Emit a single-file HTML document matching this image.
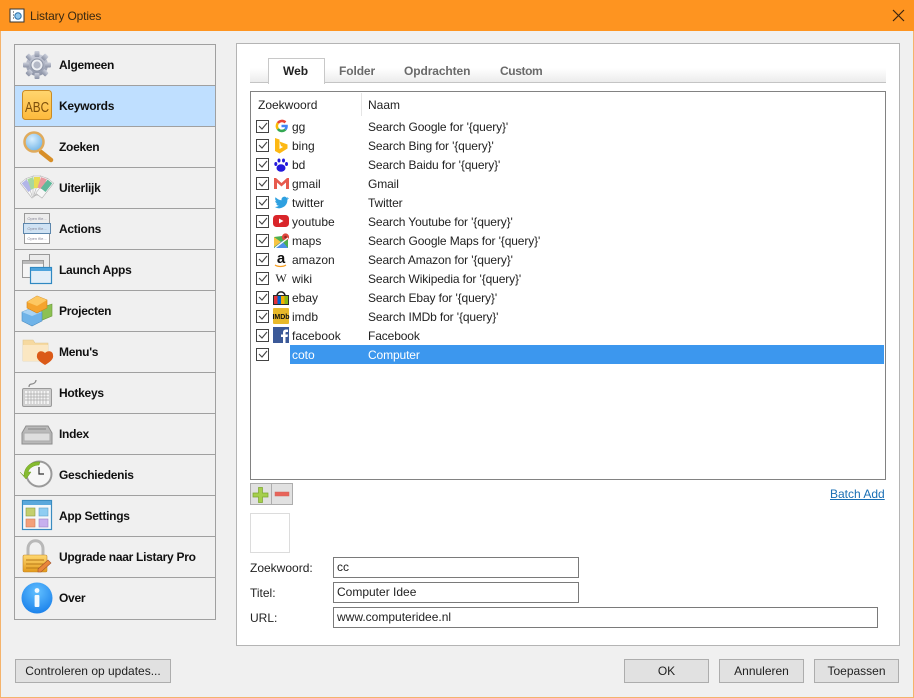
<!DOCTYPE html>
<html><head><meta charset="utf-8"><title>Listary Opties</title>
<style>
html,body{margin:0;padding:0}
body{width:914px;height:698px;position:relative;overflow:hidden;background:#f0f0f0;font-family:"Liberation Sans",sans-serif;font-size:12px;color:#222}
.a{position:absolute;white-space:nowrap}
.s{position:absolute;left:14px;width:200px;height:40px;border:1px solid #a0a0a0;border-bottom:0;background:#f0f0f0}
.sl{position:absolute;left:59px;font-weight:bold;color:#101010;font-size:12px;white-space:nowrap;line-height:14px;letter-spacing:-.28px}
.k{position:absolute;left:292px;white-space:nowrap;line-height:14px}
.n{position:absolute;left:368px;white-space:nowrap;line-height:14px;letter-spacing:-.12px}
.b{position:absolute;box-sizing:border-box;background:#e1e1e1;border:1px solid #adadad;text-align:center;line-height:22px;height:24px;color:#222}
.i{position:absolute;box-sizing:border-box;background:#fff;border:1px solid #7a7a7a;height:21px;line-height:19px;padding-left:3px;left:333px}
.t{position:absolute;top:64px;font-weight:bold;font-size:12px;line-height:14px;color:#6a6a6a;letter-spacing:-.1px}
</style></head><body>
<div class="a" style="left:0;top:0;width:914px;height:31px;background:#fe9420"></div>
<div class="a" style="left:0;top:31px;width:1px;height:667px;background:#f5b36b"></div>
<div class="a" style="right:0;top:31px;width:1px;height:667px;background:#f5b36b"></div>
<div class="a" style="left:0;top:697px;width:914px;height:1px;background:#f5b36b"></div>
<div class="a" style="left:30px;top:9px;color:#3a2a12;font-size:12px;line-height:14px;letter-spacing:-.15px">Listary Opties</div>

<div class="s" style="top:44px"></div>
<div class="s" style="top:85px;background:#bfdfff"></div>
<div class="s" style="top:126px"></div>
<div class="s" style="top:167px"></div>
<div class="s" style="top:208px"></div>
<div class="s" style="top:249px"></div>
<div class="s" style="top:290px"></div>
<div class="s" style="top:331px"></div>
<div class="s" style="top:372px"></div>
<div class="s" style="top:413px"></div>
<div class="s" style="top:454px"></div>
<div class="s" style="top:495px"></div>
<div class="s" style="top:536px"></div>
<div class="s" style="top:577px;height:41px;border-bottom:1px solid #a0a0a0"></div>
<div class="sl" style="top:58px">Algemeen</div>
<div class="sl" style="top:99px">Keywords</div>
<div class="sl" style="top:140px">Zoeken</div>
<div class="sl" style="top:181px">Uiterlijk</div>
<div class="sl" style="top:222px">Actions</div>
<div class="sl" style="top:263px">Launch Apps</div>
<div class="sl" style="top:304px">Projecten</div>
<div class="sl" style="top:345px">Menu's</div>
<div class="sl" style="top:386px">Hotkeys</div>
<div class="sl" style="top:427px">Index</div>
<div class="sl" style="top:468px">Geschiedenis</div>
<div class="sl" style="top:509px">App Settings</div>
<div class="sl" style="top:550px">Upgrade naar Listary Pro</div>
<div class="sl" style="top:591px">Over</div>

<div class="a" style="left:236px;top:43px;width:662px;height:601px;background:#fff;border:1px solid #b4b4b4"></div>
<div class="a" style="left:250px;top:68px;width:636px;height:14px;background:linear-gradient(#fff,#ececec);border-bottom:1px solid #c4c4c4"></div>
<div class="a" style="left:268px;top:58px;width:55px;height:25px;background:#fff;border:1px solid #c8c8c8;border-bottom:0"></div>
<div class="t" style="left:283px;color:#222;letter-spacing:0">Web</div>
<div class="t" style="left:339px">Folder</div>
<div class="t" style="left:404px">Opdrachten</div>
<div class="t" style="left:500px;letter-spacing:-.4px">Custom</div>

<div class="a" style="left:250px;top:91px;width:634px;height:387px;background:#fff;border:1px solid #828282"></div>
<div class="a" style="left:361px;top:93px;width:1px;height:23px;background:#e5e5e5"></div>
<div class="a" style="left:258px;top:98px;line-height:14px">Zoekwoord</div>
<div class="a" style="left:368px;top:98px;line-height:14px">Naam</div>
<div class="a" style="left:290px;top:345px;width:594px;height:19px;background:#3c97ee"></div>

<div class="k" style="top:120px">gg</div><div class="n" style="top:120px">Search Google for '{query}'</div>
<div class="k" style="top:139px">bing</div><div class="n" style="top:139px">Search Bing for '{query}'</div>
<div class="k" style="top:158px">bd</div><div class="n" style="top:158px">Search Baidu for '{query}'</div>
<div class="k" style="top:177px">gmail</div><div class="n" style="top:177px">Gmail</div>
<div class="k" style="top:196px">twitter</div><div class="n" style="top:196px">Twitter</div>
<div class="k" style="top:215px">youtube</div><div class="n" style="top:215px">Search Youtube for '{query}'</div>
<div class="k" style="top:234px">maps</div><div class="n" style="top:234px">Search Google Maps for '{query}'</div>
<div class="k" style="top:253px">amazon</div><div class="n" style="top:253px">Search Amazon for '{query}'</div>
<div class="k" style="top:272px">wiki</div><div class="n" style="top:272px">Search Wikipedia for '{query}'</div>
<div class="k" style="top:291px">ebay</div><div class="n" style="top:291px">Search Ebay for '{query}'</div>
<div class="k" style="top:310px">imdb</div><div class="n" style="top:310px">Search IMDb for '{query}'</div>
<div class="k" style="top:329px">facebook</div><div class="n" style="top:329px">Facebook</div>
<div class="k" style="top:348px;color:#fff">coto</div><div class="n" style="top:348px;color:#fff">Computer</div>

<svg class="a" style="left:0;top:0" width="914" height="698" viewBox="0 0 914 698" xmlns="http://www.w3.org/2000/svg">
<defs>
<linearGradient id="gear" x1="0" y1="0" x2="0" y2="1"><stop offset="0" stop-color="#ccd0dc"/><stop offset="1" stop-color="#8b92a5"/></linearGradient>
<linearGradient id="abc" x1="0" y1="0" x2="0" y2="1"><stop offset="0" stop-color="#ffd56e"/><stop offset="1" stop-color="#fdb93c"/></linearGradient>
<radialGradient id="lens" cx=".4" cy=".35" r=".7"><stop offset="0" stop-color="#d8efff"/><stop offset="1" stop-color="#6db2e6"/></radialGradient>
<radialGradient id="inf" cx=".5" cy=".3" r=".8"><stop offset="0" stop-color="#62c0ff"/><stop offset="1" stop-color="#1279e8"/></radialGradient>
<linearGradient id="gold" x1="0" y1="0" x2="0" y2="1"><stop offset="0" stop-color="#ffd870"/><stop offset="1" stop-color="#e39a1c"/></linearGradient>
</defs>
<!-- title icon -->
<rect x="10" y="9" width="14" height="13" fill="#fff" stroke="#333" stroke-width="1"/><circle cx="18" cy="16" r="3.2" fill="#8fc7ee" stroke="#2a6fa8"/><path d="M13 12h1M13 15h1M13 18h1" stroke="#333"/>
<path d="M893 10l11 11M904 10l-11 11" stroke="#3a2410" stroke-width="1.2" fill="none"/>
<!-- gear -->
<g transform="translate(37 65)"><g fill="url(#gear)"><circle r="11"/><g id="t"><rect x="-2.500" y="-14" width="5" height="6" rx="1"/><rect x="-2.500" y="8" width="5" height="6" rx="1"/><rect x="-14" y="-2.500" width="6" height="5" rx="1"/><rect x="8" y="-2.500" width="6" height="5" rx="1"/></g><use href="#t" transform="rotate(45)"/></g><circle r="6" fill="#eef0f4" stroke="#8d94a5"/><circle r="3.600" fill="#b4b9c7"/></g>
<!-- abc -->
<rect x="22.500" y="90.500" width="29" height="29" rx="3" fill="url(#abc)" stroke="#c98b24"/><text x="25" y="112" font-family="Liberation Sans,sans-serif" font-size="15" fill="#7d4f0c" textLength="24" lengthAdjust="spacingAndGlyphs">ABC</text>
<!-- search -->
<path d="M41 152l10 8" stroke="#d88f28" stroke-width="4.500" stroke-linecap="round"/><circle cx="34" cy="142" r="9.500" fill="url(#lens)" stroke="#e0ab5c" stroke-width="2.500"/>
<!-- palette -->
<g stroke="#aaa" stroke-width=".5" fill="#f6f6f6"><rect x="33" y="176" width="8" height="19" transform="rotate(-38 37 198)"/><rect x="33" y="176" width="8" height="19" transform="rotate(-19 37 198)"/><rect x="33" y="176" width="8" height="19"/><rect x="33" y="176" width="8" height="19" transform="rotate(19 37 198)"/><rect x="33" y="176" width="8" height="19" transform="rotate(38 37 198)"/></g>
<g><rect x="34" y="177" width="6" height="11" fill="#b2b6e8" transform="rotate(-38 37 198)"/><rect x="34" y="177" width="6" height="11" fill="#a7d7a0" transform="rotate(-19 37 198)"/><rect x="34" y="177" width="6" height="11" fill="#e9dc55"/><rect x="34" y="177" width="6" height="11" fill="#e89aa0" transform="rotate(19 37 198)"/><rect x="34" y="177" width="6" height="11" fill="#5fb89a" transform="rotate(38 37 198)"/></g>
<!-- actions -->
<g font-family="Liberation Sans,sans-serif" font-size="4" fill="#889" text-anchor="middle"><rect x="24.500" y="213.500" width="25" height="10" fill="#ececec" stroke="#999"/><text x="37" y="220">Open file...</text><rect x="24.500" y="233.500" width="25" height="10" fill="#fff" stroke="#999"/><text x="37" y="240">Open file...</text><rect x="23.500" y="223.500" width="27" height="10" fill="#cfe2f3" stroke="#5d87ad"/><text x="37" y="230">Open file...</text></g>
<!-- launch -->
<rect x="29.500" y="254.500" width="20" height="20" fill="#ececec" stroke="#999"/><rect x="22.500" y="260.500" width="21" height="17" fill="#f5f5f5" stroke="#999"/><rect x="23" y="261" width="20" height="3" fill="#bbb"/><rect x="30.500" y="267.500" width="21" height="16" fill="#e2eef8" stroke="#2f88c2" stroke-width="1.200"/><rect x="31" y="268" width="20" height="3" fill="#4ea3dc"/>
<!-- projects -->
<path d="M40 308l12-4v12l-12 5z" fill="#8cc152" stroke="#6c9a3c" stroke-width=".6"/><path d="M22 312l10-4 10 4v9l-10 5-10-5z" fill="#6fb3e8" stroke="#4b8cc0" stroke-width=".6"/><path d="M22 312l10 4 10-4-10-4z" fill="#a8d3f4"/><path d="M27 302l10-6 10 4v8l-10 5-10-5z" fill="#f5a42e" stroke="#cf8218" stroke-width=".6"/><path d="M27 302l10 4 10-6-10-4z" fill="#fdc862"/>
<!-- menu folder -->
<path d="M23 340h10l2 3h13v18H23z" fill="#f6d9a0" stroke="#e0c690" stroke-width=".6"/><rect x="23" y="345" width="25" height="16" fill="#fbe7c2"/><path d="M45 365c-5-3-9-6-8-10 .6-4 5-5 8-2 3-3 8-2 8 2 1 4-3 7-8 10z" fill="#db5a18"/>
<!-- hotkeys -->
<path d="M29 387c0-2 1-3 3-3s4-2 4-4" fill="none" stroke="#888" stroke-width="1.200"/><rect x="22.500" y="388.500" width="29" height="18" rx="1.500" fill="#cfcfcf" stroke="#9a9a9a"/><rect x="25" y="391" width="24" height="13" fill="#f4f4f4"/><path d="M25 394h24M25 397h24M25 400h24M28 391v13M31 391v13M34 391v13M37 391v13M40 391v13M43 391v13M46 391v13" stroke="#a8a8a8" stroke-width=".7"/>
<!-- index -->
<path d="M26 426h22l4 7v11H22v-11z" fill="#b9b9b9" stroke="#8d8d8d"/><rect x="24" y="433" width="26" height="8" fill="#dedede" stroke="#aaa"/><path d="M28 429h18" stroke="#888"/>
<!-- history -->
<circle cx="39" cy="474" r="12.500" fill="#f7f7f7" stroke="#9a9a9a" stroke-width="2"/><path d="M39 467v7h5" stroke="#333" stroke-width="1.200" fill="none"/><path d="M24 476c0-9 7-15 16-14l-1 3c-5 0-10 3-11 7l3 0-5 7-6-7z" fill="#86bc30" stroke="#6a9a24" stroke-width=".5"/>
<!-- app settings -->
<rect x="22.500" y="500.500" width="29" height="29" fill="#f4f8fb" stroke="#3a8cc0" stroke-width="1.200"/><rect x="23" y="501" width="28" height="4" fill="#5aa8dc"/><rect x="26" y="508" width="9" height="8" fill="#c3cf6e" stroke="#8c9b44" stroke-width=".6"/><rect x="39" y="508" width="9" height="8" fill="#8fcdf2" stroke="#5fa0c8" stroke-width=".6"/><rect x="26" y="519" width="9" height="8" fill="#f3a07a" stroke="#cd7c58" stroke-width=".6"/><rect x="39" y="519" width="9" height="8" fill="#c7b0ee" stroke="#9b84c6" stroke-width=".6"/>
<!-- lock -->
<path d="M28 556v-7c0-11 15-11 15 0v7" fill="none" stroke="#b8b8b8" stroke-width="3"/><rect x="23" y="555" width="24" height="17" rx="1.500" fill="url(#gold)" stroke="#c2862a" stroke-width=".6"/><path d="M26 560h18M26 564h18M26 568h14" stroke="#b87a18" stroke-width="1"/><path d="M38 572l3 0 10-9-3-3-10 9z" fill="#e9873a" stroke="#a3522c" stroke-width=".6"/>
<!-- info -->
<circle cx="37" cy="598" r="15.500" fill="url(#inf)"/><circle cx="37" cy="590.500" r="2.400" fill="#f3faff"/><rect x="34.600" y="595" width="4.800" height="12" rx="1" fill="#f3faff"/>
<!-- checkboxes -->
<g fill="#fff" stroke="#444"><rect x="256.500" y="120.500" width="12" height="12"/><rect x="256.500" y="139.500" width="12" height="12"/><rect x="256.500" y="158.500" width="12" height="12"/><rect x="256.500" y="177.500" width="12" height="12"/><rect x="256.500" y="196.500" width="12" height="12"/><rect x="256.500" y="215.500" width="12" height="12"/><rect x="256.500" y="234.500" width="12" height="12"/><rect x="256.500" y="253.500" width="12" height="12"/><rect x="256.500" y="272.500" width="12" height="12"/><rect x="256.500" y="291.500" width="12" height="12"/><rect x="256.500" y="310.500" width="12" height="12"/><rect x="256.500" y="329.500" width="12" height="12"/><rect x="256.500" y="348.500" width="12" height="12"/></g>
<g fill="none" stroke="#444" stroke-width="1.100"><path d="M259 126l3 3 5-6"/><path d="M259 145l3 3 5-6"/><path d="M259 164l3 3 5-6"/><path d="M259 183l3 3 5-6"/><path d="M259 202l3 3 5-6"/><path d="M259 221l3 3 5-6"/><path d="M259 240l3 3 5-6"/><path d="M259 259l3 3 5-6"/><path d="M259 278l3 3 5-6"/><path d="M259 297l3 3 5-6"/><path d="M259 316l3 3 5-6"/><path d="M259 335l3 3 5-6"/><path d="M259 354l3 3 5-6"/></g>
<!-- google -->
<g fill="none" stroke-width="2.600" transform="translate(0 -1)"><path d="M285.400 123.400a5 5 0 0 0-7.500 .6" stroke="#ea4335"/><path d="M277.900 124a5 5 0 0 0 0 6" stroke="#fbbc05"/><path d="M277.900 130a5 5 0 0 0 7.500 .5" stroke="#34a853"/><path d="M285.400 130.500a5 5 0 0 0 1.100-3.500h-5" stroke="#4285f4"/></g>
<!-- bing -->
<path d="M275 138l4.500 1.500v9.500l3.500-2-2-1-1.500-4.500 8 3v4l-8 5-4.500-2.500z" fill="#fdb813"/>
<!-- baidu -->
<g fill="#2319dc"><ellipse cx="281" cy="168" rx="4.500" ry="3.800"/><ellipse cx="275.800" cy="164" rx="1.500" ry="2"/><ellipse cx="279" cy="160.500" rx="1.500" ry="2"/><ellipse cx="283.500" cy="160.500" rx="1.500" ry="2"/><ellipse cx="286.500" cy="164" rx="1.500" ry="2"/></g>
<!-- gmail -->
<path d="M274 178h2l5.500 5 5.500-5h2v11h-3v-6.500l-4.500 4-4.500-4v6.500h-3z" fill="#e75a4d"/>
<!-- twitter -->
<path d="M288.500 198c-.5.300-1 .4-1.500.5.500-.3 1-.8 1.200-1.400-.5.300-1 .5-1.600.6a2.900 2.900 0 0 0-5 2.600c-2.400-.1-4.500-1.300-6-3-.8 1.300-.4 3 .9 3.900-.5 0-.9-.1-1.300-.4 0 1.400 1 2.600 2.300 2.900-.4.100-.9.100-1.300 0 .4 1.200 1.500 2 2.700 2a6 6 0 0 1-4.300 1.200 8.300 8.300 0 0 0 12.800-7.300c.6-.4 1.200-1 1.600-1.600z" fill="#2ea0e0"/>
<!-- youtube -->
<rect x="273" y="215" width="16" height="12" rx="3.500" fill="#d9252a"/><path d="M279 218.500l4.500 2.500-4.500 2.500z" fill="#fff"/>
<!-- maps -->
<path d="M274 237l8-1 6 3v9h-14z" fill="#4caf50"/><path d="M274 248l8-7 6 7z" fill="#4d90e8"/><path d="M274 237l7 5-7 5z" fill="#f6c445"/><circle cx="285.500" cy="237" r="3.600" fill="#e0483e"/><circle cx="285.500" cy="237" r="1.300" fill="#8e2a22"/><path d="M275 248l13-10" stroke="#fff" stroke-width="1.200"/>
<!-- amazon -->
<text x="281" y="263" font-family="Liberation Sans,sans-serif" font-weight="bold" font-size="15" fill="#111" text-anchor="middle">a</text><path d="M275 265c3 2 8 2 11 0" fill="none" stroke="#f79c1c" stroke-width="1.200"/>
<!-- wiki -->
<text x="281" y="282" font-family="Liberation Serif,serif" font-size="12" fill="#222" text-anchor="middle">W</text>
<!-- ebay -->
<path d="M277 296c0-5.500 8-5.500 8 0" fill="none" stroke="#222" stroke-width="1.500"/><rect x="273" y="295" width="16" height="10" fill="#2a2a2a"/><rect x="274" y="296" width="3.500" height="8" fill="#e53238"/><rect x="277.500" y="296" width="3.500" height="8" fill="#0064d2"/><rect x="281" y="296" width="3.500" height="8" fill="#f5af02"/><rect x="284.500" y="296" width="3.500" height="8" fill="#86b817"/>
<!-- imdb -->
<rect x="273" y="308" width="16" height="16" rx="1" fill="#e8b92a"/><text x="281" y="319" font-family="Liberation Sans,sans-serif" font-weight="bold" font-size="7" fill="#111" text-anchor="middle">IMDb</text>
<!-- facebook -->
<rect x="273" y="327" width="16" height="16" fill="#3b5998"/><path d="M283 343v-6h-2v-2.500h2v-2c0-2 1.300-3 3-3h2v2.500h-1.500c-.8 0-1 .4-1 1v1.500h2.500l-.4 2.500h-2.100v6z" fill="#fff"/>
<!-- add/remove -->
<rect x="250.500" y="483.500" width="21" height="21" fill="#e1e1e1" stroke="#adadad"/><rect x="271.500" y="483.500" width="21" height="21" fill="#e1e1e1" stroke="#adadad"/>
<path d="M258.500 487.500h4v5.500h5.500v4h-5.500v5.500h-4V497H253v-4h5.500z" fill="#a5cf4c" stroke="#7ba52f" stroke-width=".7"/><rect x="275" y="492" width="14" height="4" fill="#e8645a" stroke="#d2665c" stroke-width=".5"/>
</svg>

<a class="a" style="left:830px;top:487px;color:#1a6fb4;text-decoration:underline;line-height:14px">Batch Add</a>
<div class="a" style="left:250px;top:513px;width:38px;height:38px;background:#fff;border:1px solid #dcdcdc"></div>
<div class="a" style="left:250px;top:561px;line-height:14px">Zoekwoord:</div>
<div class="a" style="left:250px;top:586px;line-height:14px">Titel:</div>
<div class="a" style="left:250px;top:611px;line-height:14px">URL:</div>
<div class="i" style="top:557px;width:246px">cc</div>
<div class="i" style="top:582px;width:246px">Computer Idee</div>
<div class="i" style="top:607px;width:545px">www.computeridee.nl</div>

<div class="b" style="left:15px;top:659px;width:156px">Controleren op updates...</div>
<div class="b" style="left:624px;top:659px;width:85px">OK</div>
<div class="b" style="left:719px;top:659px;width:85px">Annuleren</div>
<div class="b" style="left:814px;top:659px;width:85px">Toepassen</div>
</body></html>
